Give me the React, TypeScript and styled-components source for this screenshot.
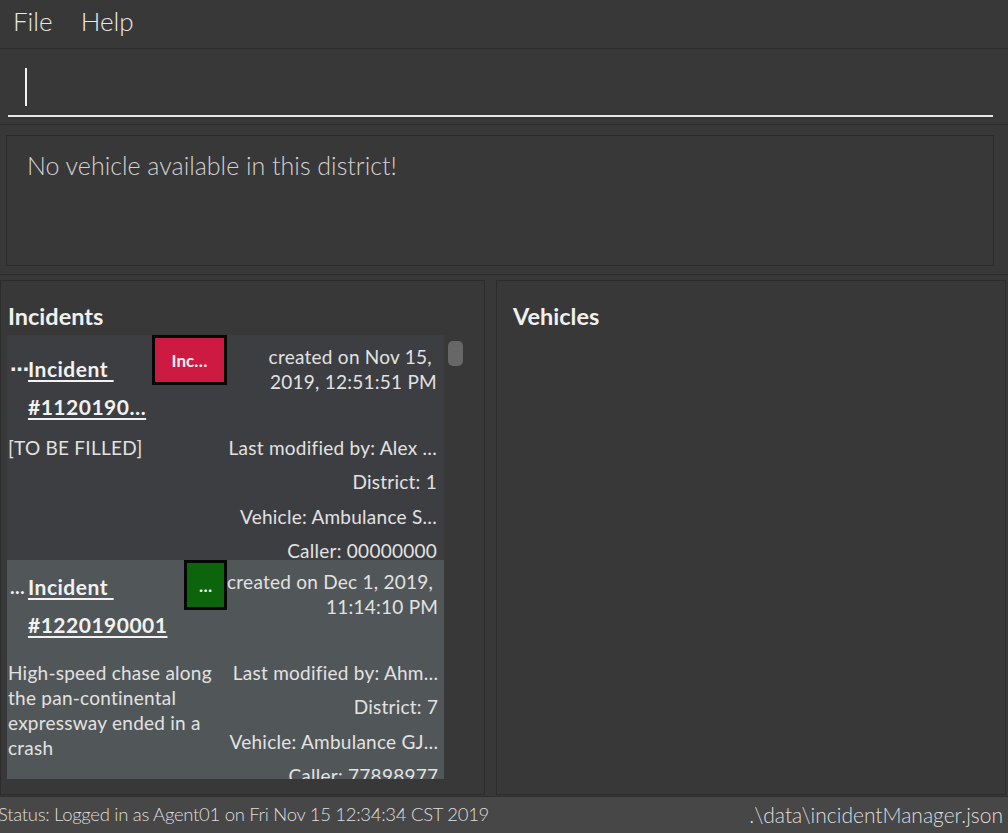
import React from 'react';
import styled, { createGlobalStyle } from 'styled-components';

const Global = createGlobalStyle`
  html, body { margin: 0; padding: 0; background: #383838; }
  body { font-family: Lato, "Open Sans", "DejaVu Sans", sans-serif; }
  * { box-sizing: border-box; }
`;

const Window = styled.div`
  width: 1008px;
  height: 833px;
  display: flex;
  flex-direction: column;
  background: #383838;
  overflow: hidden;
`;

const MenuBar = styled.div`
  height: 49px;
  flex: none;
  display: flex;
  align-items: flex-start;
  gap: 28px;
  padding: 5px 0 0 13px;
  border-bottom: 1px solid #2d2d2d;
`;

const MenuItem = styled.span`
  font-size: 26px;
  line-height: 32px;
  font-weight: 300;
  color: #e8e8e8;
`;

const CommandSection = styled.div`
  height: 76px;
  flex: none;
  display: flex;
  align-items: flex-end;
  padding: 0 15px 7px 8px;
  border-bottom: 1px solid #2d2d2d;
`;

const CommandInput = styled.div`
  flex: 1;
  height: 50px;
  display: flex;
  align-items: flex-start;
  padding: 1px 0 0 17px;
  border-bottom: 2px solid #e6e6e6;
`;

const Caret = styled.div`
  width: 2px;
  height: 38px;
  background: #f2f2f2;
`;

const ResultSection = styled.div`
  height: 150px;
  flex: none;
  display: flex;
  padding: 10px 14px 8px 6px;
  border-bottom: 1px solid #2d2d2d;
`;

const ResultBox = styled.div`
  flex: 1;
  border: 1px solid #2b2b2b;
  padding: 14px 20px;
  font-size: 25px;
  line-height: 30px;
  font-weight: 300;
  color: #d2d2d2;
`;

const SplitArea = styled.div`
  flex: 1;
  min-height: 0;
  display: flex;
  padding: 5px 2px 1px 0;
  gap: 11px;
`;

const Pane = styled.div<{ $width?: number; $inset: number }>`
  ${(p) => (p.$width ? `width: ${p.$width}px; flex: none;` : 'flex: 1;')}
  display: flex;
  flex-direction: column;
  border: 1px solid #2c2c2c;
  padding: 20px 0 0 ${(p) => p.$inset}px;
  min-height: 0;
`;

const PaneTitle = styled.div`
  font-size: 23.5px;
  line-height: 30px;
  font-weight: 700;
  color: #f0f0f0;
  margin-left: 1px;
  height: 34px;
`;

const ListView = styled.div`
  display: flex;
  height: 444px;
`;

const ListCells = styled.div`
  width: 437px;
  height: 100%;
  overflow: hidden;
  display: flex;
  flex-direction: column;
`;

const ScrollColumn = styled.div`
  width: 25px;
  padding: 6px 0 0 4px;
`;

const ScrollThumb = styled.div`
  width: 15px;
  height: 25px;
  border-radius: 5px;
  background: #676767;
`;

const Card = styled.div<{ $bg: string; $height?: number }>`
  flex: none;
  ${(p) => (p.$height ? `height: ${p.$height}px;` : 'flex: 1;')}
  overflow: hidden;
  background: ${(p) => p.$bg};
  display: grid;
  grid-template-columns: 219px 1fr;
  grid-template-rows: 100px auto;
  padding: 0 7px 0 1px;
`;

const TitleRow = styled.div`
  display: flex;
  align-items: flex-start;
`;

const IdLabel = styled.span<{ $top: number }>`
  width: 20px;
  padding: ${(p) => p.$top}px 0 0 2px;
  font-size: 19px;
  line-height: 38px;
  font-weight: 700;
  color: #f2f2f2;
`;

const TitleBlock = styled.div<{ $top: number }>`
  display: flex;
  flex-direction: column;
  align-items: flex-start;
  padding-top: ${(p) => p.$top}px;
`;

const TitleLine = styled.span`
  white-space: pre;
  font-size: 21px;
  letter-spacing: 0.5px;
  line-height: 38px;
  font-weight: 700;
  color: #f2f2f2;
  text-decoration: underline;
  text-decoration-thickness: 2px;
  text-underline-offset: 3px;
`;

const Badge = styled.div<{ $bg: string; $width: number }>`
  margin-left: auto;
  width: ${(p) => p.$width}px;
  height: 50px;
  flex: none;
  border: 3px solid #070707;
  background: ${(p) => p.$bg};
  display: flex;
  align-items: center;
  justify-content: center;
  font-size: 17px;
  font-weight: 700;
  color: #f6eef0;
`;

const RightTop = styled.div`
  display: flex;
  flex-direction: column;
  align-items: flex-end;
  padding-top: 9px;
`;

const InfoText = styled.span<{ $tight?: boolean }>`
  white-space: pre;
  font-size: 19px;
  letter-spacing: 0.25px;
  line-height: ${(p) => (p.$tight ? 22 : 25)}px;
  color: #e2e2e2;
`;

const Description = styled.div`
  font-size: 19px;
  letter-spacing: 0.25px;
  line-height: 25px;
  color: #e2e2e2;
  padding-right: 2px;
`;

const DetailList = styled.div`
  display: flex;
  flex-direction: column;
  align-items: flex-end;
  padding-top: 1.5px;
  gap: 12.5px;
`;

const StatusBar = styled.div`
  height: 37px;
  flex: none;
  display: flex;
  align-items: center;
  justify-content: space-between;
  padding: 0 5px 2px 0;
  background: #474747;
  border-top: 1px solid #2e2e2e;
  font-weight: 300;
  color: #dedede;
`;

const StatusLeft = styled.span`
  margin-left: -2px;
  font-size: 18.5px;
  letter-spacing: -0.3px;
`;

const StatusRight = styled.span`
  font-size: 21px;
`;

type Incident = {
  id: string;
  titleLines: string[];
  titleTop: number;
  badge: string;
  badgeBg: string;
  badgeWidth: number;
  created: string[];
  description: string;
  modified: string;
  district: string;
  vehicle: string;
  caller: string;
  bg: string;
  height?: number;
};

const incidents: Incident[] = [
  {
    id: '⋯',
    titleLines: ['Incident ', '#1120190…'],
    titleTop: 15,
    badge: 'Inc…',
    badgeBg: '#cc1a40',
    badgeWidth: 75,
    created: ['created on Nov 15, ', '2019, 12:51:51 PM'],
    description: '[TO BE FILLED]',
    modified: 'Last modified by: Alex …',
    district: 'District: 1',
    vehicle: 'Vehicle: Ambulance S…',
    caller: 'Caller: 00000000',
    bg: '#3c3e41',
    height: 225,
  },
  {
    id: '…',
    titleLines: ['Incident ', '#1220190001'],
    titleTop: 8,
    badge: '…',
    badgeBg: '#0c650c',
    badgeWidth: 43,
    created: ['created on Dec 1, 2019, ', '11:14:10 PM'],
    description: 'High-speed chase along the pan-continental expressway ended in a crash',
    modified: 'Last modified by: Ahm…',
    district: 'District: 7',
    vehicle: 'Vehicle: Ambulance GJ…',
    caller: 'Caller: 77898977',
    bg: '#515658',
  },
];

function IncidentCard({ item }: { item: Incident }) {
  return (
    <Card $bg={item.bg} $height={item.height}>
      <TitleRow>
        <IdLabel $top={item.titleTop}>{item.id}</IdLabel>
        <TitleBlock $top={item.titleTop}>
          {item.titleLines.map((l) => (
            <TitleLine key={l}>{l}</TitleLine>
          ))}
        </TitleBlock>
        <Badge $bg={item.badgeBg} $width={item.badgeWidth}>
          {item.badge}
        </Badge>
      </TitleRow>
      <RightTop>
        {item.created.map((c) => (
          <InfoText key={c}>{c}</InfoText>
        ))}
      </RightTop>
      <Description>{item.description}</Description>
      <DetailList>
        <InfoText $tight>{item.modified}</InfoText>
        <InfoText $tight>{item.district}</InfoText>
        <InfoText $tight>{item.vehicle}</InfoText>
        <InfoText $tight>{item.caller}</InfoText>
      </DetailList>
    </Card>
  );
}

export default function App() {
  return (
    <>
      <Global />
      <Window>
        <MenuBar>
          <MenuItem>File</MenuItem>
          <MenuItem>Help</MenuItem>
        </MenuBar>
        <CommandSection>
          <CommandInput>
            <Caret />
          </CommandInput>
        </CommandSection>
        <ResultSection>
          <ResultBox>No vehicle available in this district!</ResultBox>
        </ResultSection>
        <SplitArea>
          <Pane $width={485} $inset={6}>
            <PaneTitle>Incidents</PaneTitle>
            <ListView>
              <ListCells>
                {incidents.map((i) => (
                  <IncidentCard key={i.titleLines[1]} item={i} />
                ))}
              </ListCells>
              <ScrollColumn>
                <ScrollThumb />
              </ScrollColumn>
            </ListView>
          </Pane>
          <Pane $inset={15}>
            <PaneTitle>Vehicles</PaneTitle>
          </Pane>
        </SplitArea>
        <StatusBar>
          <StatusLeft>Status: Logged in as Agent01 on Fri Nov 15 12:34:34 CST 2019</StatusLeft>
          <StatusRight>.\data\incidentManager.json</StatusRight>
        </StatusBar>
      </Window>
    </>
  );
}
